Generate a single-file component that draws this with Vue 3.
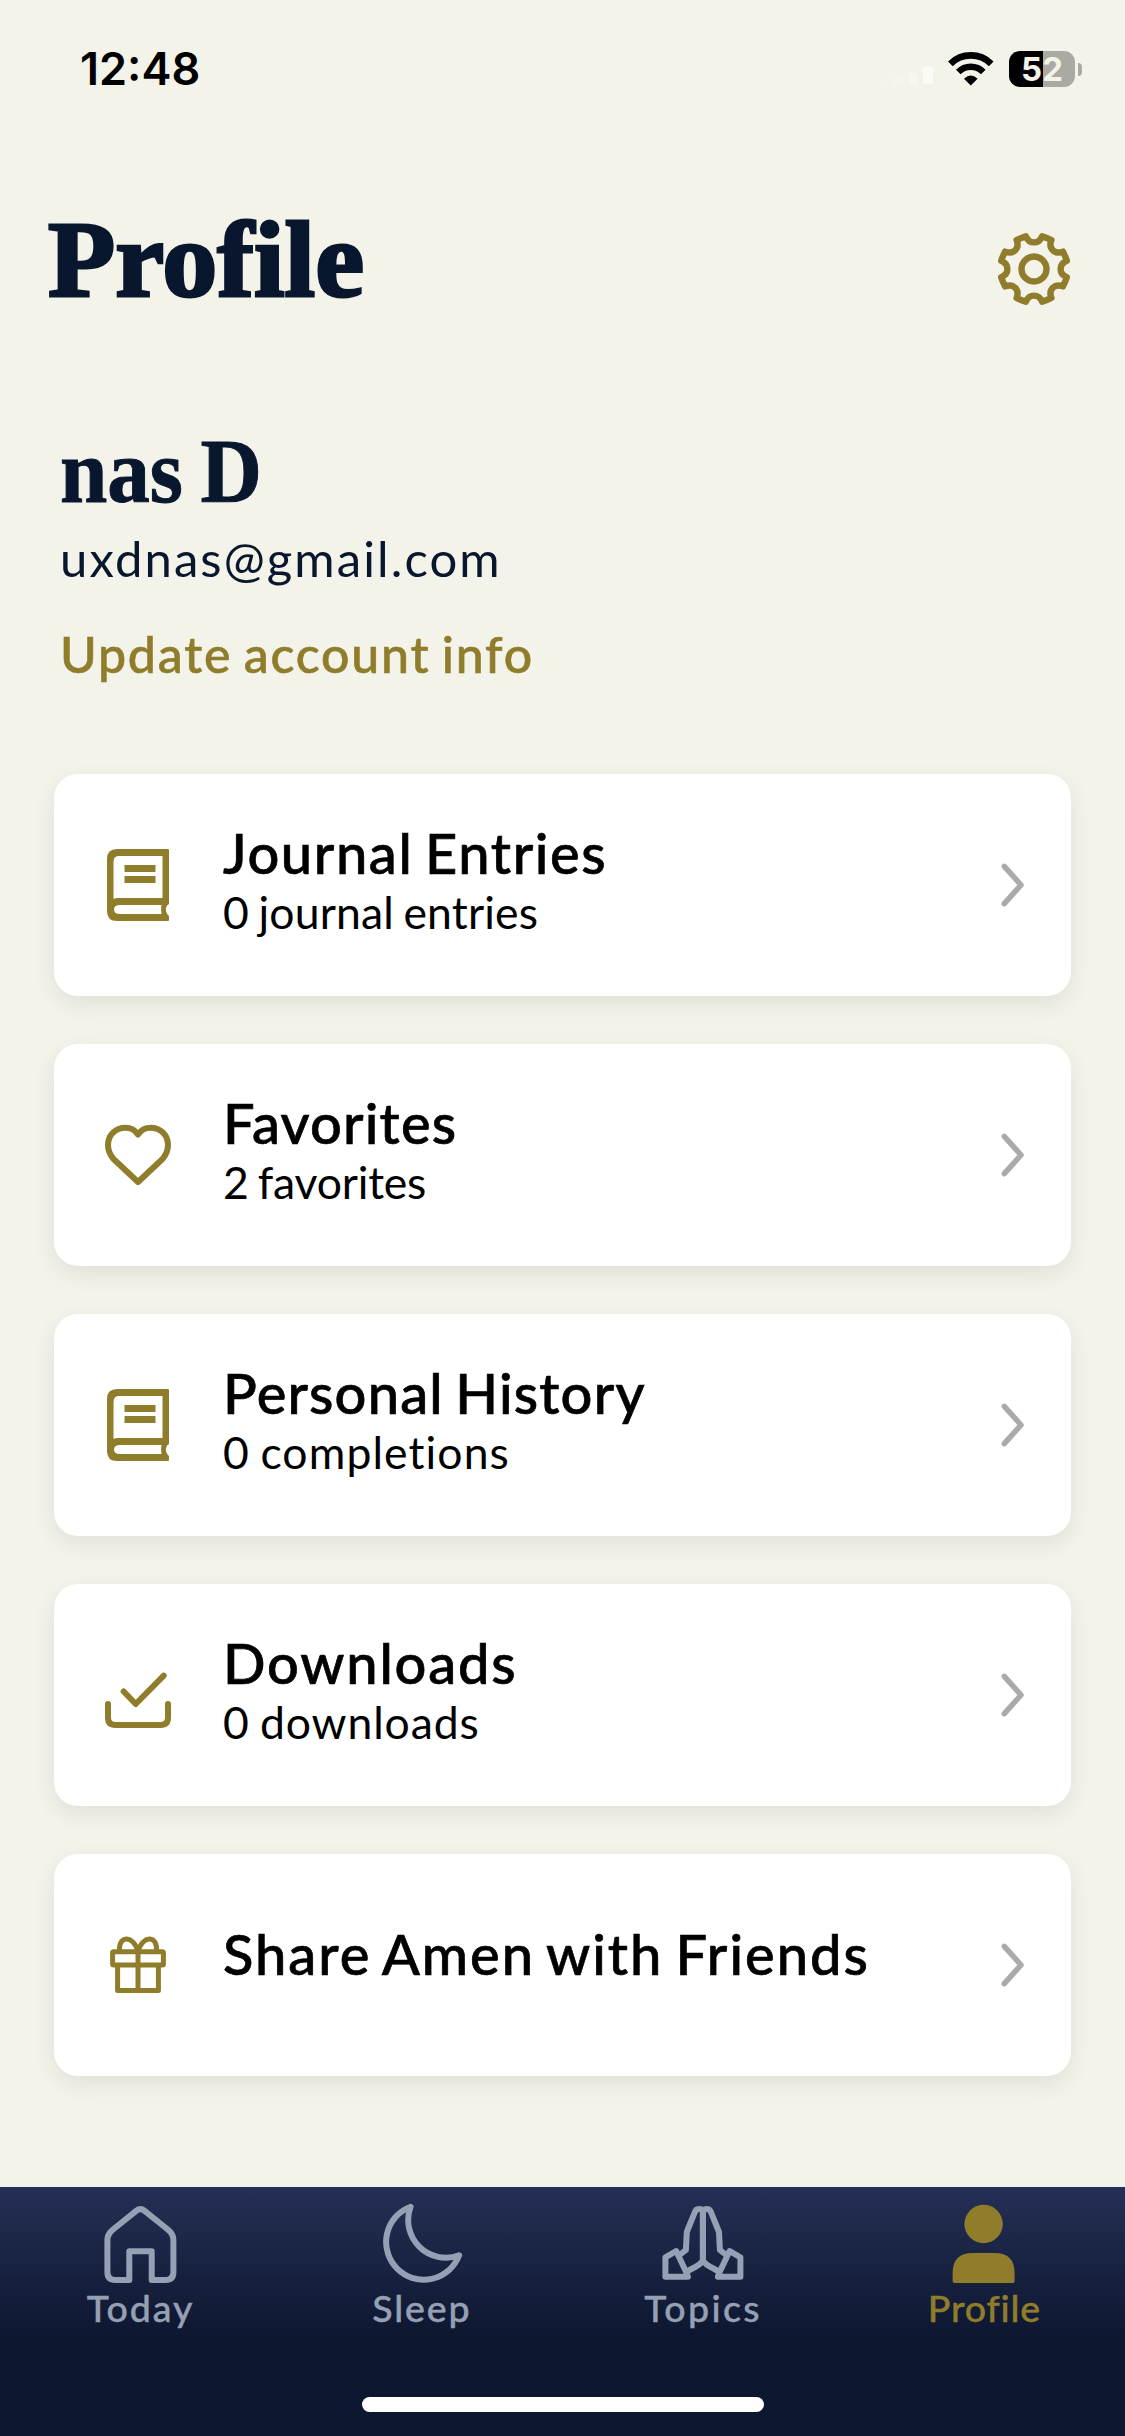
<script setup>
const cards = [
  { title: 'Journal Entries', sub: '0 journal entries', icon: 'book', track: 1.6, subTrack: 0.15 },
  { title: 'Favorites', sub: '2 favorites', icon: 'heart', track: 1.2, subTrack: -0.2 },
  { title: 'Personal History', sub: '0 completions', icon: 'book', track: 1.2, subTrack: 1.1 },
  { title: 'Downloads', sub: '0 downloads', icon: 'download', track: 1.8, subTrack: 0.9 },
  { title: 'Share Amen with Friends', sub: '', icon: 'gift', track: 2 },
]
const tabs = [
  { label: 'Today', icon: 'home', track: 2 },
  { label: 'Sleep', icon: 'moon', track: 1.9 },
  { label: 'Topics', icon: 'hands', track: 2.4 },
  { label: 'Profile', icon: 'person', track: 0.8, active: true },
]

// Eight-toothed gear outline with scooped notches
function gearPath(c) {
  const at = (r, deg) => {
    const a = (deg - 90) * Math.PI / 180
    return `${(c + r * Math.cos(a)).toFixed(2)} ${(c + r * Math.sin(a)).toFixed(2)}`
  }
  let d = `M${at(33.8, 14)}`
  for (let k = 0; k < 8; k++) {
    const b = k * 45
    d += `Q${at(33.8, b + 22.5)} ${at(33.8, b + 31)}C${at(25, b + 34)} ${at(25, b + 56)} ${at(33.8, b + 59)}`
  }
  return d + 'Z'
}
const gear = gearPath(38)
</script>

<template>
  <main class="screen">
    <header class="status">
      <span class="time">12:48</span>
      <div class="indicators">
        <svg class="signal" width="56" height="22" viewBox="0 0 56 22">
          <rect x="1" y="14" width="9" height="5" rx="1" opacity=".2" />
          <rect x="14" y="12" width="12" height="7" rx="1" opacity=".25" />
          <rect x="31" y="8" width="8" height="11" rx="1" opacity=".6" />
          <rect x="45" y="2" width="10" height="17" rx="1" />
        </svg>
        <svg class="wifi" width="46" height="34" viewBox="0 0 46 34">
          <path d="M2.400 11.800A29 29 0 0 1 43.200 11.800" fill="none" stroke="#000" stroke-width="6.600" />
          <path d="M10.300 20A17.500 17.500 0 0 1 35.300 20" fill="none" stroke="#000" stroke-width="6.400" />
          <path d="M16 26.800Q22.800 20.400 29.600 26.800L22.800 33.500Z" fill="#000" />
        </svg>
        <div class="battery"><span class="level">52</span></div>
        <i class="nub"></i>
      </div>
    </header>

    <section class="heading">
      <h1>Profile</h1>
      <svg class="gear" width="76" height="76" viewBox="0 0 76 76">
        <path :d="gear" />
        <circle cx="38" cy="38" r="12.500" />
      </svg>
    </section>

    <section class="account">
      <h2>nas D</h2>
      <p class="email">uxdnas@gmail.com</p>
      <a class="update">Update account info</a>
    </section>

    <section class="cards">
      <article v-for="c in cards" :key="c.title" class="card">
        <svg class="icon" width="72" height="72" viewBox="0 0 72 72">
          <template v-if="c.icon === 'book'">
            <path class="solid" fill-rule="evenodd" d="M66 0H15Q5 0 5 10V62Q5 72 15 72H66Q67 72 67 71V67L65.500 65.500Q62.500 61 65 56.500L67 55V1Q67 0 66 0ZM11.500 13Q11.500 7 16.500 7H60.500V49H16Q13.500 49 11.500 50ZM18 56H59.500Q58.500 60 59.500 65H18Q12 65 12 60.500Q12 56 18 56Z" />
            <path class="solid" d="M22.500 16H53.500V23H22.500ZM22.500 27H53.500V34H22.500Z" />
          </template>
          <path v-else-if="c.icon === 'heart'" class="line" d="M36 15.500C33 11 28.500 8.700 23.500 8.700C13.500 8.700 6 16 6 26C6 31.500 8.500 36.500 11.500 40L36 63L60.500 40C63.500 36.500 66 31.500 66 26C66 16 58.500 8.700 48.500 8.700C43.500 8.700 39 11 36 15.500Z" />
          <template v-else-if="c.icon === 'download'">
            <path class="line" d="M21.700 32.500L33.700 45L61.700 16.700" />
            <path class="line" d="M6 45V58.500Q6 66 13.500 66H58.500Q66 66 66 58.500V45" />
          </template>
          <g v-else class="gift">
            <rect x="10.600" y="22.800" width="50.800" height="13.200" rx="1" />
            <path d="M15.600 36V61.400H56.400V36M36 22V61" />
            <path d="M17.600 22C16 7 30.500 5 36 22C41.500 5 56 7 54.400 22" />
          </g>
        </svg>
        <div class="copy" :class="{ single: !c.sub }">
          <h3 :style="{ letterSpacing: c.track + 'px' }">{{ c.title }}</h3>
          <p v-if="c.sub" :style="{ letterSpacing: c.subTrack + 'px' }">{{ c.sub }}</p>
        </div>
        <svg class="chevron" width="24" height="44" viewBox="0 0 24 44">
          <path d="M4.300 3.300L21 22L4.300 40.700" />
        </svg>
      </article>
    </section>

    <nav class="tabs">
      <div v-for="t in tabs" :key="t.label" class="tab" :class="{ active: t.active }">
        <svg width="84" height="80" viewBox="0 0 84 80">
          <path v-if="t.icon === 'home'" transform="translate(5.400 3)" d="M31.800 4.800Q36 1.500 40.200 4.800L64 24Q69 28.500 69 34V66Q69 74 61 74H47.300V45.200H24.900V74H11Q3 74 3 66V34Q3 28.500 8 24Z" />
          <path v-else-if="t.icon === 'moon'" transform="translate(3.100 0)" d="M27.500 3.700A37.700 37.700 0 1 0 76 52.300A37.700 37.700 0 0 1 27.500 3.700Z" />
          <g v-else-if="t.icon === 'hands'" transform="translate(.9 3)">
            <g id="hand">
              <path d="M41 55V4Q34.800 1.500 33 6L24.900 26L24 44L17 49.500" />
              <path d="M41 55Q37 59.500 33 61.200L25 65.500" />
              <path d="M14.300 45L3.500 51.300V70.700H26L24.700 67Z" />
            </g>
            <use href="#hand" transform="matrix(-1 0 0 1 82 0)" />
          </g>
          <g v-else class="person">
            <circle cx="41.600" cy="21" r="19.200" />
            <path d="M10.600 78V70Q10.600 50 30.600 50H52.600Q72.600 50 72.600 70V78Q72.600 80 70.600 80H12.600Q10.600 80 10.600 78Z" />
          </g>
        </svg>
        <span :style="{ letterSpacing: t.track + 'px' }">{{ t.label }}</span>
      </div>
      <div class="home-indicator"></div>
    </nav>
  </main>
</template>

<style>
body { margin: 0; background: #f4f3e9; }
</style>

<style scoped>
* { box-sizing: border-box; }
h1, h2, h3, p { margin: 0; }
.screen {
  width: 1125px;
  height: 2436px;
  display: flex;
  flex-direction: column;
  background: #f4f3e9;
  font-family: Lato, "Liberation Sans", sans-serif;
  overflow: hidden;
}
.status {
  flex: none;
  height: 138px;
  padding: 0 43px 0 80px;
  display: flex;
  justify-content: space-between;
  align-items: center;
  font-family: Inter, sans-serif;
}
.time { font-size: 45px; font-weight: 600; line-height: 54px; color: #000; }
.indicators { display: flex; align-items: center; }
.signal { fill: #fbfbf5; margin-top: 14px; }
.wifi { margin-left: 14px; }
.battery {
  margin-left: 15px;
  width: 66px;
  height: 36px;
  border-radius: 11px;
  background: linear-gradient(90deg, #000 52%, #aaa9a2 52%);
  display: flex;
  align-items: center;
  justify-content: center;
}
.level { font-size: 33px; font-weight: 700; line-height: 36px; color: #f4f3e9; }
.nub { width: 4px; height: 13px; margin-left: 3px; border-radius: 0 5px 5px 0; background: #aaa9a2; }
.heading {
  flex: none;
  height: 262px;
  padding: 62px 53px 0 48px;
  display: flex;
  justify-content: space-between;
  align-items: flex-start;
}
h1, h2 { font-family: "Liberation Serif", serif; font-weight: 700; color: #09172e; transform-origin: left; }
h1 { font-size: 108px; line-height: 120px; -webkit-text-stroke: 3px #09172e; transform: scaleX(1.02); }
.gear { margin-top: 31px; fill: none; stroke: #8f7d2c; stroke-width: 6.400; stroke-linejoin: round; }
.account { flex: none; height: 374px; padding: 24px 60px 0; display: flex; flex-direction: column; align-items: flex-start; }
h2 { font-size: 90px; line-height: 96px; word-spacing: -4px; transform: scaleX(.945); -webkit-text-stroke: 1px #09172e; }
.email { margin-top: 8px; font-size: 49px; line-height: 60px; letter-spacing: 2.1px; color: #09172e; }
.update { margin-top: 36px; font-size: 50px; line-height: 60px; font-weight: 500; letter-spacing: 1.8px; word-spacing: -3px; color: #8f7d2c; -webkit-text-stroke: .6px #8f7d2c; }
.cards { flex: 1; padding: 0 54px; display: flex; flex-direction: column; gap: 48px; }
.card {
  height: 222px;
  padding: 0 47px 0 48px;
  display: flex;
  align-items: center;
  border-radius: 24px;
  background: #fff;
  box-shadow: 0 8px 24px rgba(0, 0, 0, .08);
}
.icon { flex: none; }
.solid { fill: #8f7d2c; }
.line { fill: none; stroke: #8f7d2c; stroke-width: 6; stroke-linecap: round; stroke-linejoin: round; }
.gift { fill: none; stroke: #8f7d2c; stroke-width: 5; stroke-linejoin: round; }
.copy { flex: 1; align-self: stretch; padding: 49px 0 0 49px; color: #000; }
.copy.single { padding-top: 70px; }
h3 { font-size: 56px; line-height: 60px; font-weight: 500; word-spacing: -4px; -webkit-text-stroke: .7px #000; font-variant-ligatures: none; }
.copy p { margin-top: 4px; font-size: 44.5px; line-height: 50px; word-spacing: -2px; font-variant-ligatures: none; }
.chevron { flex: none; fill: none; stroke: #aaa; stroke-width: 5.5; stroke-linecap: round; stroke-linejoin: round; }
.tabs {
  position: relative;
  flex: none;
  height: 249px;
  padding-top: 16px;
  display: flex;
  align-items: flex-start;
  background: linear-gradient(#262f55 0, #212c50 20px, #0e1730 150px);
  box-shadow: 0 -2px 0 #f0f1f3;
}
.tab { flex: 1; display: flex; flex-direction: column; align-items: center; color: #96a0b4; }
.tab.active { color: #8f7d2c; }
.tab svg { fill: none; stroke: currentColor; stroke-width: 6; stroke-linecap: round; stroke-linejoin: round; }
.tab .person { fill: currentColor; stroke: none; }
.tab span { margin-top: 5px; font-size: 37.5px; line-height: 40px; font-weight: 500; font-variant-ligatures: none; -webkit-text-stroke: .4px currentColor; }
.home-indicator {
  position: absolute;
  left: 362px;
  top: 210px;
  width: 402px;
  height: 15px;
  border-radius: 8px;
  background: #fff;
}
</style>
